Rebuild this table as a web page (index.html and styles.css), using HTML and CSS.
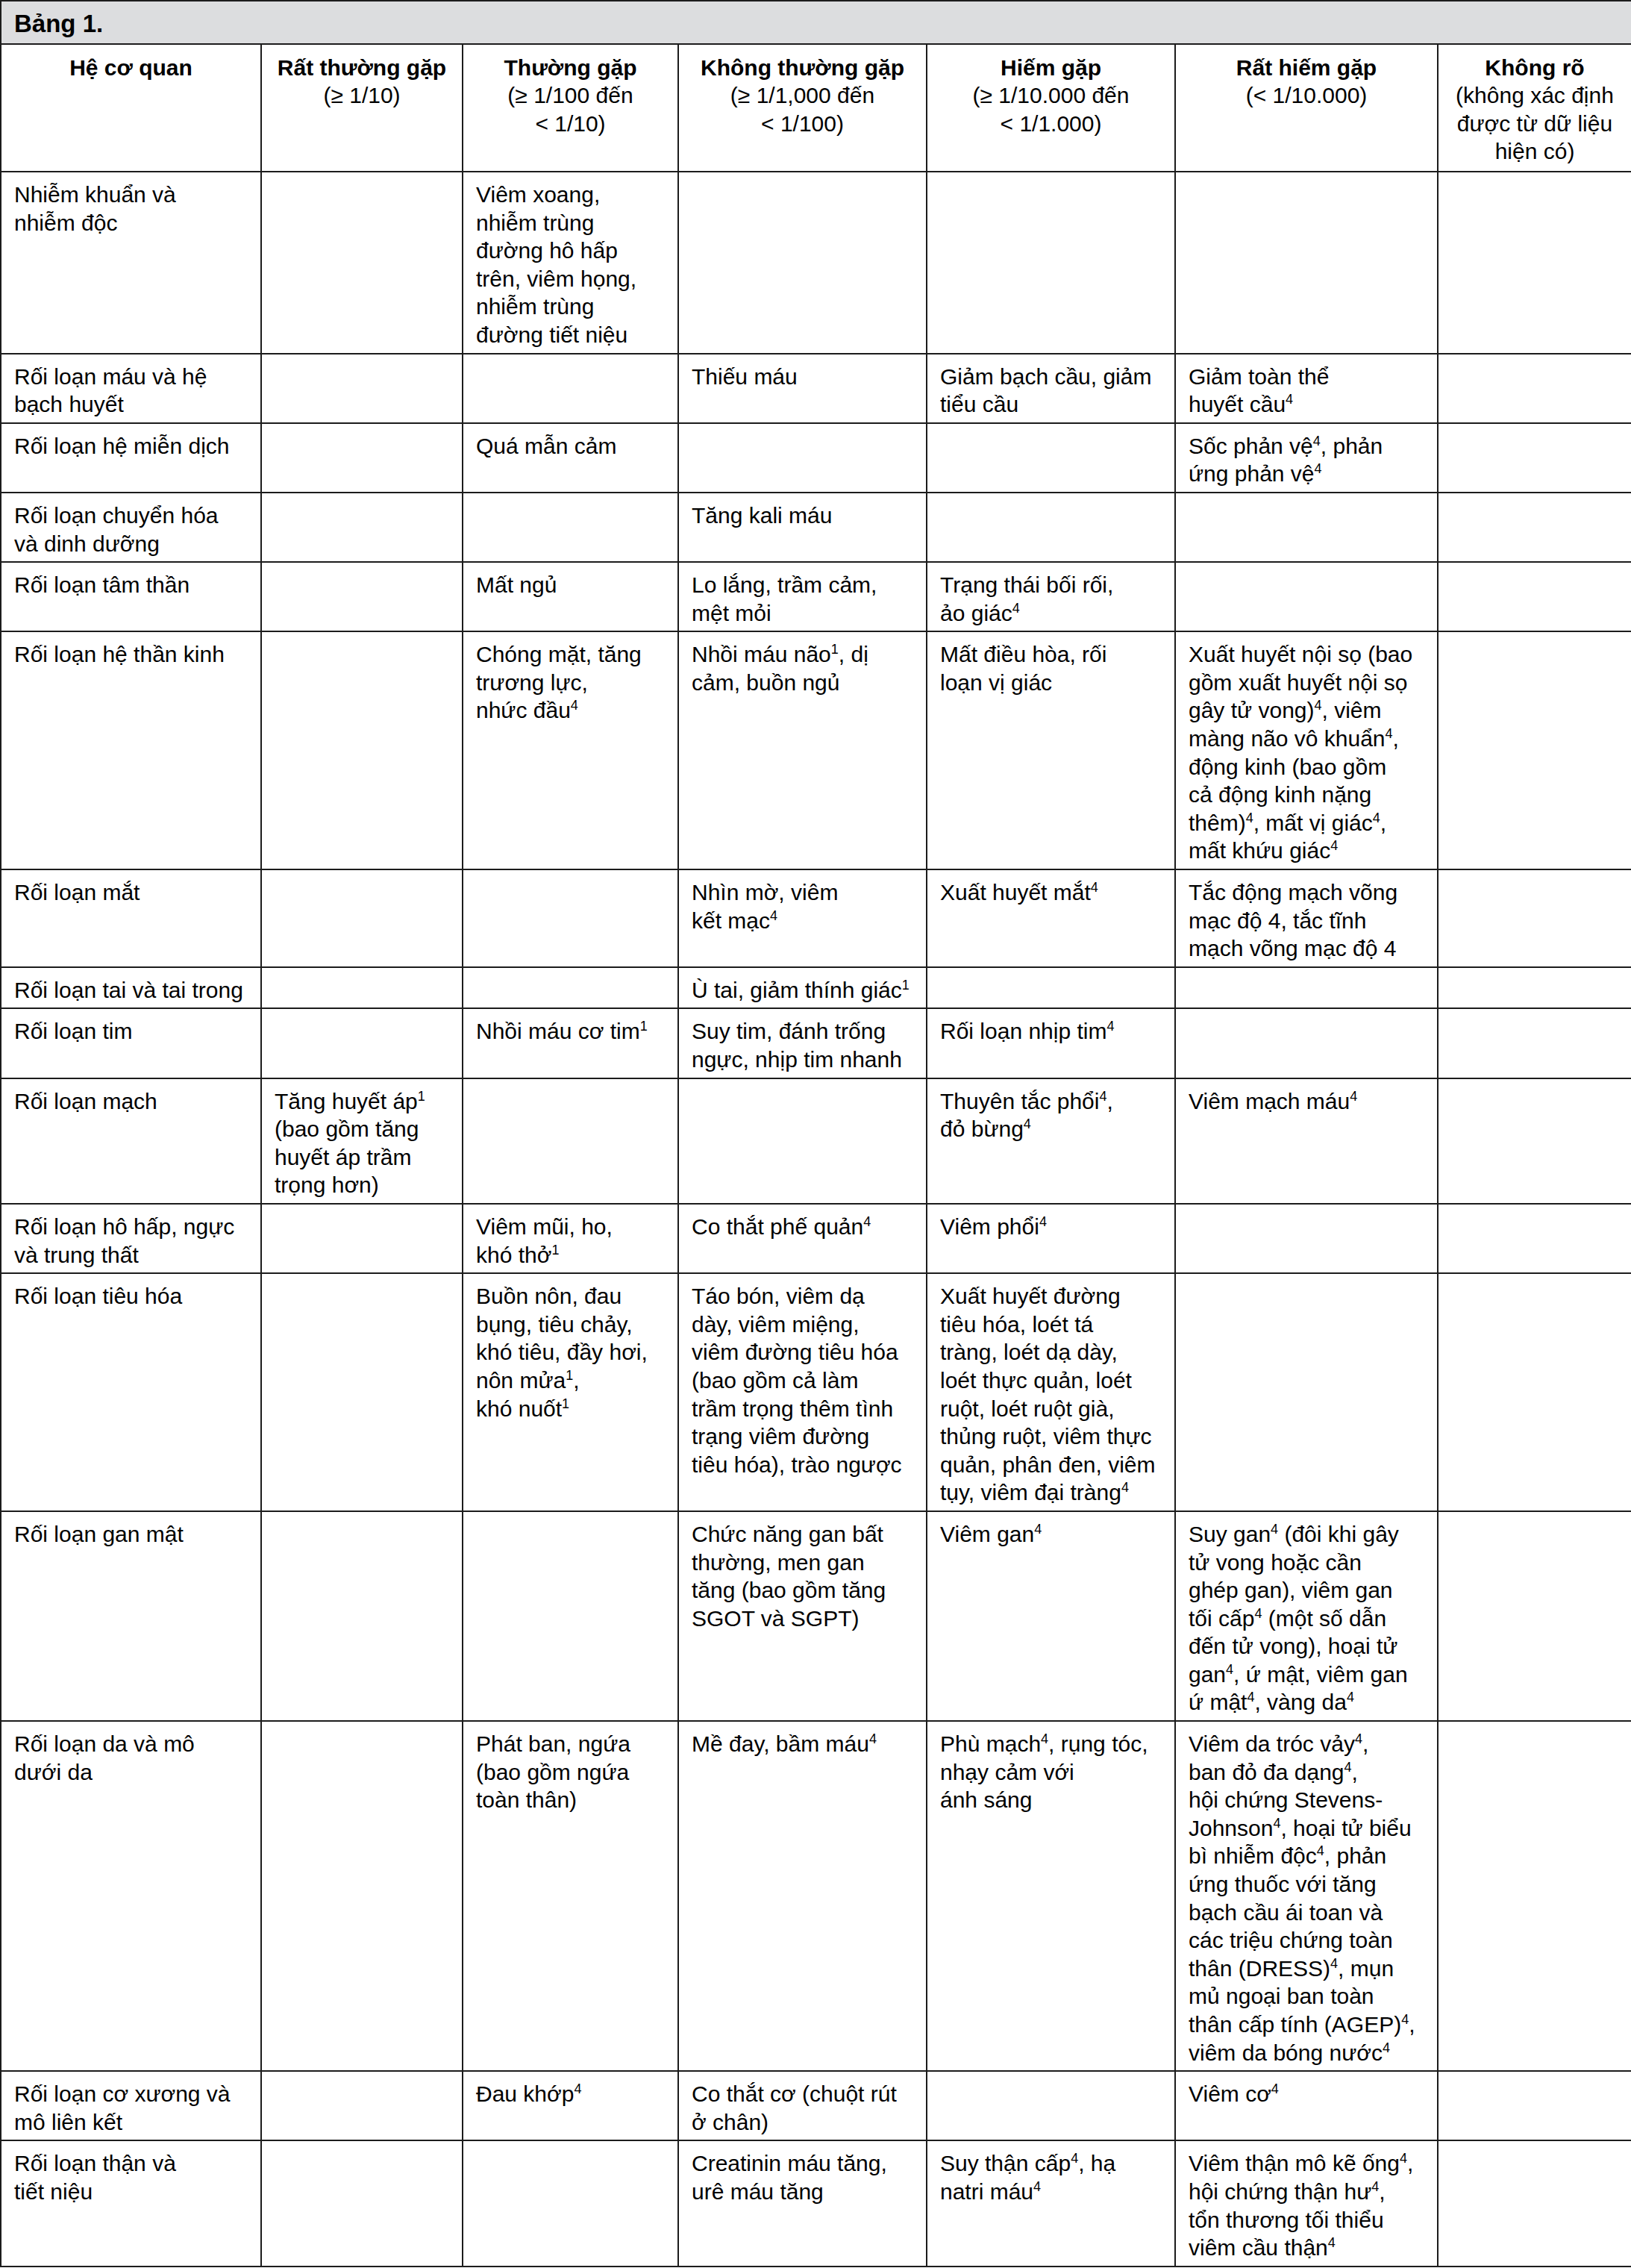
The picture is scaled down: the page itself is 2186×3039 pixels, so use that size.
FILE: index.html
```html
<!DOCTYPE html>
<html lang="vi">
<head>
<meta charset="utf-8">
<title>Bảng 1.</title>
<link rel="stylesheet" href="styles.css">
</head>
<body>
<table class="adr">
  <colgroup>
    <col class="c1"><col class="c2"><col class="c3"><col class="c4"><col class="c5"><col class="c6"><col class="c7">
  </colgroup>
  <thead>
    <tr><th colspan="7" class="title">Bảng 1.</th></tr>
    <tr class="head">
      <th><span class="h">Hệ cơ quan</span></th>
      <th><span class="h">Rất thường gặp</span><br>(≥ 1/10)</th>
      <th><span class="h">Thường gặp</span><br>(≥ 1/100 đến<br>&lt; 1/10)</th>
      <th><span class="h">Không thường gặp</span><br>(≥ 1/1,000 đến<br>&lt; 1/100)</th>
      <th><span class="h">Hiếm gặp</span><br>(≥ 1/10.000 đến<br>&lt; 1/1.000)</th>
      <th><span class="h">Rất hiếm gặp</span><br>(&lt; 1/10.000)</th>
      <th><span class="h">Không rõ</span><br>(không xác định<br>được từ dữ liệu<br>hiện có)</th>
    </tr>
  </thead>
  <tbody>
    <tr>
      <td>Nhiễm khuẩn và<br>nhiễm độc</td>
      <td></td>
      <td>Viêm xoang,<br>nhiễm trùng<br>đường hô hấp<br>trên, viêm họng,<br>nhiễm trùng<br>đường tiết niệu</td>
      <td></td><td></td><td></td><td></td>
    </tr>
    <tr>
      <td>Rối loạn máu và hệ<br>bạch huyết</td>
      <td></td><td></td>
      <td>Thiếu máu</td>
      <td>Giảm bạch cầu, giảm<br>tiểu cầu</td>
      <td>Giảm toàn thể<br>huyết cầu<sup>4</sup></td>
      <td></td>
    </tr>
    <tr>
      <td>Rối loạn hệ miễn dịch</td>
      <td></td>
      <td>Quá mẫn cảm</td>
      <td></td><td></td>
      <td>Sốc phản vệ<sup>4</sup>, phản<br>ứng phản vệ<sup>4</sup></td>
      <td></td>
    </tr>
    <tr>
      <td>Rối loạn chuyển hóa<br>và dinh dưỡng</td>
      <td></td><td></td>
      <td>Tăng kali máu</td>
      <td></td><td></td><td></td>
    </tr>
    <tr>
      <td>Rối loạn tâm thần</td>
      <td></td>
      <td>Mất ngủ</td>
      <td>Lo lắng, trầm cảm,<br>mệt mỏi</td>
      <td>Trạng thái bối rối,<br>ảo giác<sup>4</sup></td>
      <td></td><td></td>
    </tr>
    <tr>
      <td>Rối loạn hệ thần kinh</td>
      <td></td>
      <td>Chóng mặt, tăng<br>trương lực,<br>nhức đầu<sup>4</sup></td>
      <td>Nhồi máu não<sup>1</sup>, dị<br>cảm, buồn ngủ</td>
      <td>Mất điều hòa, rối<br>loạn vị giác</td>
      <td>Xuất huyết nội sọ (bao<br>gồm xuất huyết nội sọ<br>gây tử vong)<sup>4</sup>, viêm<br>màng não vô khuẩn<sup>4</sup>,<br>động kinh (bao gồm<br>cả động kinh nặng<br>thêm)<sup>4</sup>, mất vị giác<sup>4</sup>,<br>mất khứu giác<sup>4</sup></td>
      <td></td>
    </tr>
    <tr>
      <td>Rối loạn mắt</td>
      <td></td><td></td>
      <td>Nhìn mờ, viêm<br>kết mạc<sup>4</sup></td>
      <td>Xuất huyết mắt<sup>4</sup></td>
      <td>Tắc động mạch võng<br>mạc độ 4, tắc tĩnh<br>mạch võng mạc độ 4</td>
      <td></td>
    </tr>
    <tr>
      <td>Rối loạn tai và tai trong</td>
      <td></td><td></td>
      <td>Ù tai, giảm thính giác<sup>1</sup></td>
      <td></td><td></td><td></td>
    </tr>
    <tr>
      <td>Rối loạn tim</td>
      <td></td>
      <td>Nhồi máu cơ tim<sup>1</sup></td>
      <td>Suy tim, đánh trống<br>ngực, nhịp tim nhanh</td>
      <td>Rối loạn nhịp tim<sup>4</sup></td>
      <td></td><td></td>
    </tr>
    <tr>
      <td>Rối loạn mạch</td>
      <td>Tăng huyết áp<sup>1</sup><br>(bao gồm tăng<br>huyết áp trầm<br>trọng hơn)</td>
      <td></td><td></td>
      <td>Thuyên tắc phổi<sup>4</sup>,<br>đỏ bừng<sup>4</sup></td>
      <td>Viêm mạch máu<sup>4</sup></td>
      <td></td>
    </tr>
    <tr>
      <td>Rối loạn hô hấp, ngực<br>và trung thất</td>
      <td></td>
      <td>Viêm mũi, ho,<br>khó thở<sup>1</sup></td>
      <td>Co thắt phế quản<sup>4</sup></td>
      <td>Viêm phổi<sup>4</sup></td>
      <td></td><td></td>
    </tr>
    <tr>
      <td>Rối loạn tiêu hóa</td>
      <td></td>
      <td>Buồn nôn, đau<br>bụng, tiêu chảy,<br>khó tiêu, đầy hơi,<br>nôn mửa<sup>1</sup>,<br>khó nuốt<sup>1</sup></td>
      <td>Táo bón, viêm dạ<br>dày, viêm miệng,<br>viêm đường tiêu hóa<br>(bao gồm cả làm<br>trầm trọng thêm tình<br>trạng viêm đường<br>tiêu hóa), trào ngược</td>
      <td>Xuất huyết đường<br>tiêu hóa, loét tá<br>tràng, loét dạ dày,<br>loét thực quản, loét<br>ruột, loét ruột già,<br>thủng ruột, viêm thực<br>quản, phân đen, viêm<br>tụy, viêm đại tràng<sup>4</sup></td>
      <td></td><td></td>
    </tr>
    <tr>
      <td>Rối loạn gan mật</td>
      <td></td><td></td>
      <td>Chức năng gan bất<br>thường, men gan<br>tăng (bao gồm tăng<br>SGOT và SGPT)</td>
      <td>Viêm gan<sup>4</sup></td>
      <td>Suy gan<sup>4</sup> (đôi khi gây<br>tử vong hoặc cần<br>ghép gan), viêm gan<br>tối cấp<sup>4</sup> (một số dẫn<br>đến tử vong), hoại tử<br>gan<sup>4</sup>, ứ mật, viêm gan<br>ứ mật<sup>4</sup>, vàng da<sup>4</sup></td>
      <td></td>
    </tr>
    <tr>
      <td>Rối loạn da và mô<br>dưới da</td>
      <td></td>
      <td>Phát ban, ngứa<br>(bao gồm ngứa<br>toàn thân)</td>
      <td>Mề đay, bầm máu<sup>4</sup></td>
      <td>Phù mạch<sup>4</sup>, rụng tóc,<br>nhạy cảm với<br>ánh sáng</td>
      <td>Viêm da tróc vảy<sup>4</sup>,<br>ban đỏ đa dạng<sup>4</sup>,<br>hội chứng Stevens-<br>Johnson<sup>4</sup>, hoại tử biểu<br>bì nhiễm độc<sup>4</sup>, phản<br>ứng thuốc với tăng<br>bạch cầu ái toan và<br>các triệu chứng toàn<br>thân (DRESS)<sup>4</sup>, mụn<br>mủ ngoại ban toàn<br>thân cấp tính (AGEP)<sup>4</sup>,<br>viêm da bóng nước<sup>4</sup></td>
      <td></td>
    </tr>
    <tr>
      <td>Rối loạn cơ xương và<br>mô liên kết</td>
      <td></td>
      <td>Đau khớp<sup>4</sup></td>
      <td>Co thắt cơ (chuột rút<br>ở chân)</td>
      <td></td>
      <td>Viêm cơ<sup>4</sup></td>
      <td></td>
    </tr>
    <tr>
      <td>Rối loạn thận và<br>tiết niệu</td>
      <td></td><td></td>
      <td>Creatinin máu tăng,<br>urê máu tăng</td>
      <td>Suy thận cấp<sup>4</sup>, hạ<br>natri máu<sup>4</sup></td>
      <td>Viêm thận mô kẽ ống<sup>4</sup>,<br>hội chứng thận hư<sup>4</sup>,<br>tổn thương tối thiểu<br>viêm cầu thận<sup>4</sup></td>
      <td></td>
    </tr>
  </tbody>
</table>
</body>
</html>
```
FILE: styles.css
```css
html, body {
  margin: 0;
  padding: 0;
  background: #ffffff;
}

body {
  font-family: "Liberation Sans", Arial, sans-serif;
  font-size: 30px;
  line-height: 37.6px;
  color: #000000;
}

.adr {
  width: 2186px;
  border-collapse: collapse;
  table-layout: fixed;
}

.c1 { width: 349px; }
.c2 { width: 270px; }
.c3 { width: 289px; }
.c4 { width: 333px; }
.c5 { width: 333px; }
.c6 { width: 352px; }
.c7 { width: 260px; }

.adr th,
.adr td {
  border: 2px solid #1c1c1c;
  padding: 11px 4px 5px 17px;
  vertical-align: top;
  text-align: left;
  font-weight: normal;
  white-space: nowrap;
}

.adr .title {
  background: #dcdddf;
  font-size: 33px;
  font-weight: bold;
  padding-top: 11px;
  padding-bottom: 7px;
}

.adr .head th {
  text-align: center;
  padding: 12px 4px 7px 4px;
}

.h {
  font-weight: bold;
}

sup {
  font-size: 18px;
  line-height: 0;
  vertical-align: 11px;
}
```
